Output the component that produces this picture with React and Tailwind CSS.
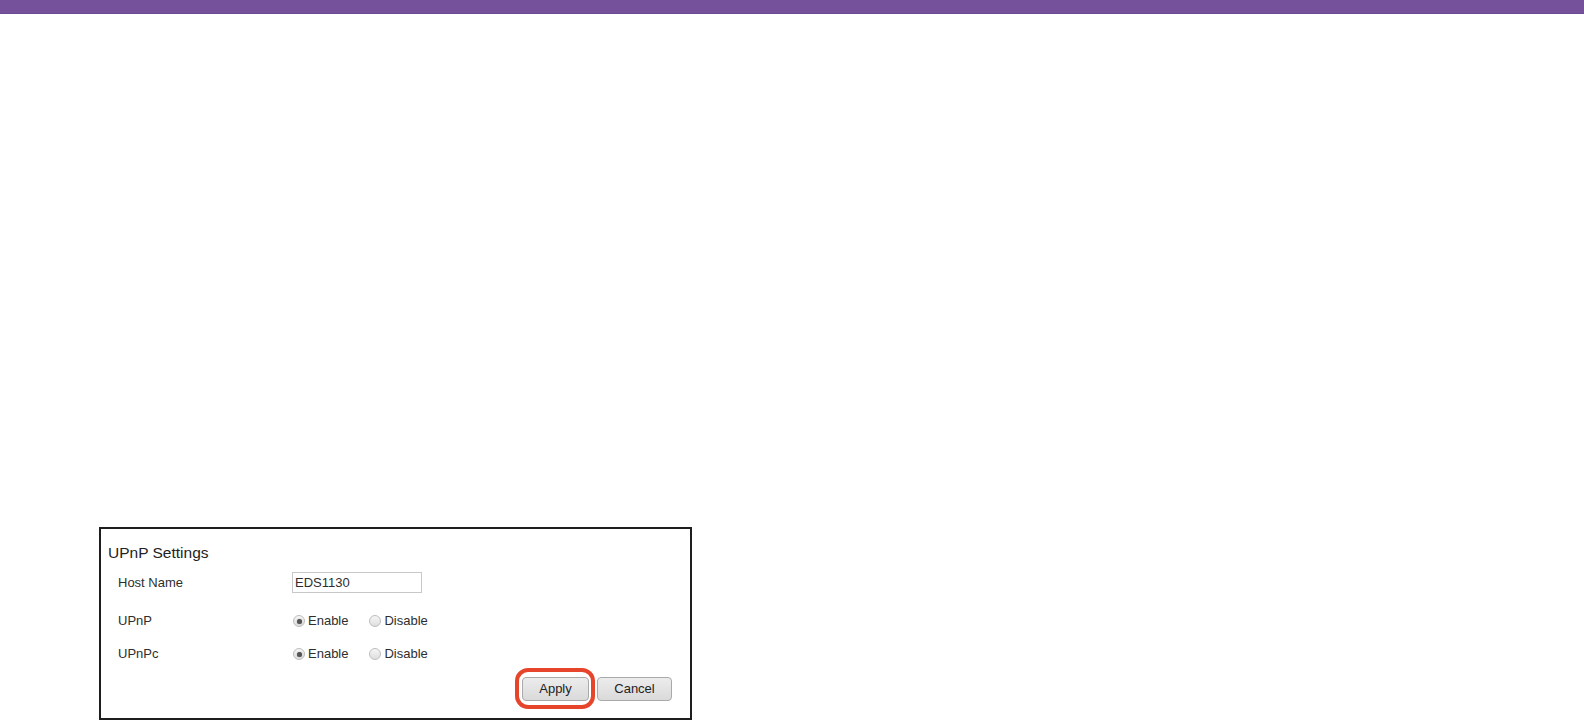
import React, { useState } from "react";

const Radio = ({ checked, onClick }) => (
  <span
    onClick={onClick}
    className="w-[12px] h-[12px] rounded-full border border-[#bdbdbd] bg-gradient-to-b from-[#f6f6f6] to-[#dedede] flex items-center justify-center shrink-0 cursor-pointer"
  >
    {checked && <span className="w-[5px] h-[5px] rounded-full bg-[#555] shadow-[0_0_1px_#777]" />}
  </span>
);

const RadioPair = ({ value, onChange }) => (
  <div className="flex items-center">
    <div className="ml-[1px] flex items-center">
      <Radio checked={value} onClick={() => onChange(true)} />
      <span className="ml-[3px]">Enable</span>
    </div>
    <div className="ml-[21px] flex items-center">
      <Radio checked={!value} onClick={() => onChange(false)} />
      <span className="ml-[3px]">Disable</span>
    </div>
  </div>
);

const App = () => {
  const [upnp, setUpnp] = useState(true);
  const [upnpc, setUpnpc] = useState(true);

  return (
    <div className="w-[1584px] h-[721px] bg-white overflow-hidden font-['Liberation_Sans',Arial,sans-serif] text-[#2e2e2e]">
      <div className="h-[14px] bg-[#76519b] border-b border-[#6e4a93]" />

      <div className="mt-[513px] ml-[99px] w-[593px] h-[193px] border-2 border-[#1e1e1e] pt-[14px] pr-[18px]">
        <div className="pl-[7px] h-[20px] flex items-center text-[15.5px] text-[#222]">
          UPnP Settings
        </div>

        <div className="mt-[9px] h-[21px] flex items-center text-[13px]">
          <div className="w-[174px] ml-[17px]">Host Name</div>
          <input
            defaultValue="EDS1130"
            className="w-[130px] h-[21px] border border-[#c8c8c8] px-[2px] text-[13px] text-[#2e2e2e] outline-none"
          />
        </div>

        <div className="mt-[18px] h-[20px] flex items-center text-[13px]">
          <div className="w-[174px] ml-[17px]">UPnP</div>
          <RadioPair value={upnp} onChange={setUpnp} />
        </div>

        <div className="mt-[13px] h-[20px] flex items-center text-[13px]">
          <div className="w-[174px] ml-[17px]">UPnPc</div>
          <RadioPair value={upnpc} onChange={setUpnpc} />
        </div>

        <div className="mt-[13px] flex justify-end gap-[8px] text-[13px]">
          <div className="relative">
            <button className="w-[67px] h-[24px] rounded-[4px] border border-[#a9a9a9] bg-gradient-to-b from-[#ececec] to-[#dadada] text-[#222]">
              Apply
            </button>
            <span className="absolute left-[-7px] top-[-9px] right-[-6px] bottom-[-8px] border-[4px] border-[#e6452b] rounded-[13px] pointer-events-none" />
          </div>
          <button className="w-[75px] h-[24px] rounded-[4px] border border-[#a9a9a9] bg-gradient-to-b from-[#ececec] to-[#dadada] text-[#222]">
            Cancel
          </button>
        </div>
      </div>
    </div>
  );
};

export default App;
